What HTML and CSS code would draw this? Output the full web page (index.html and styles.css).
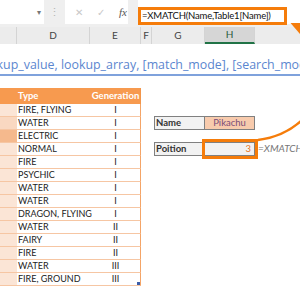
FILE: index.html
```html
<!DOCTYPE html>
<html lang="en">
<head>
    <meta charset="UTF-8">
    <title>XMATCH example</title>
    <link rel="stylesheet" href="styles.css">
</head>
<body>
    <div class="excel">
        <!-- Formula bar -->
        <div class="formula-bar">
            <div class="name-box"><span class="caret">▾</span></div>
            <div class="grip">⋮</div>
            <div class="fx-box">
                <span class="cancel">✕</span>
                <span class="enter">✓</span>
                <span class="fx">fx</span>
            </div>
            <div class="formula">
                <div class="formula-text">=XMATCH(Name,Table1[Name])</div>
            </div>
        </div>

        <!-- Column letters -->
        <div class="col-heads">
            <div class="ch ch-c"></div>
            <div class="ch ch-d">D</div>
            <div class="ch ch-e">E</div>
            <div class="ch ch-f">F</div>
            <div class="ch ch-g">G</div>
            <div class="ch ch-h active">H</div>
            <div class="ch ch-i"></div>
        </div>

        <div class="sheet">
            <div class="hint">XMATCH(lookup_value, lookup_array, [match_mode], [search_mode])</div>

            <div class="grid">
                <div class="th first"></div>
                <div class="th">Type</div>
                <div class="th gen">Generation</div>

                <div class="td first"></div><div class="td">FIRE, FLYING</div><div class="td gen">I</div>
                <div class="td first mid"></div><div class="td">WATER</div><div class="td gen">I</div>
                <div class="td first hit"></div><div class="td">ELECTRIC</div><div class="td gen">I</div>
                <div class="td first"></div><div class="td">NORMAL</div><div class="td gen">I</div>
                <div class="td first"></div><div class="td">FIRE</div><div class="td gen">I</div>
                <div class="td first"></div><div class="td">PSYCHIC</div><div class="td gen">I</div>
                <div class="td first"></div><div class="td">WATER</div><div class="td gen">I</div>
                <div class="td first"></div><div class="td">WATER</div><div class="td gen">I</div>
                <div class="td first"></div><div class="td">DRAGON, FLYING</div><div class="td gen">I</div>
                <div class="td first"></div><div class="td">WATER</div><div class="td gen">II</div>
                <div class="td first"></div><div class="td">FAIRY</div><div class="td gen">II</div>
                <div class="td first"></div><div class="td">FIRE</div><div class="td gen">II</div>
                <div class="td first"></div><div class="td">WATER</div><div class="td gen">III</div>
                <div class="td first"></div><div class="td">FIRE, GROUND</div><div class="td gen last">III</div>

                <div class="label name-label">Name</div>
                <div class="value name-value">Pikachu</div>
                <div class="label pos-label">Poition</div>
                <div class="value pos-value">3</div>
                <div class="echo">=XMATCH(Name,Table1[Name])</div>
            </div>
        </div>

        <svg class="callout" width="300" height="300" viewBox="0 0 300 300">
            <path d="M258 140 Q283 137 301 121" fill="none" stroke="#f57c0a" stroke-width="2.5"/>
            <polygon points="290.5,23 300,23 300,34" fill="#f57c0a"/>
        </svg>
    </div>
</body>
</html>
```

FILE: styles.css
```css
/* Page */
body {
    margin: 0;
    background-color: #fff;
    font-family: Lato, "Liberation Sans", sans-serif;
}

.excel {
    position: relative;
    width: 300px;
    height: 300px;
    overflow: hidden;
    background-color: #fff;
}

/* Formula bar */
.formula-bar {
    display: flex;
    align-items: flex-start;
    height: 27px;
    background-color: #efefef;
}

.name-box {
    display: flex;
    justify-content: flex-end;
    align-items: center;
    width: 44px;
    height: 24px;
    background-color: #fff;
    box-sizing: border-box;
    padding-right: 3px;
}

.caret {
    font-size: 8px;
    color: #777;
}

.grip {
    width: 21px;
    text-align: center;
    color: #b5b5b5;
    font-size: 11px;
    line-height: 24px;
}

.fx-box {
    display: flex;
    align-items: center;
    gap: 14px;
    width: 63px;
    height: 24px;
    padding-left: 10px;
    box-sizing: border-box;
    background-color: #fff;
}

.cancel,
.enter {
    color: #c8c8c8;
    font-size: 10px;
}

.fx {
    color: #555;
    font-family: "Liberation Serif", serif;
    font-style: italic;
    font-size: 11px;
}

.formula {
    flex: 1;
    height: 24px;
    margin-left: 10px;
    background-color: #fff;
}

.formula-text {
    width: 149px;
    height: 18px;
    margin-top: 7px;
    border: 3px solid #f57c0a;
    box-sizing: border-box;
    padding-left: 1px;
    font-size: 9.5px;
    letter-spacing: -0.2px;
    line-height: 12px;
    color: #111;
    white-space: nowrap;
    overflow: hidden;
}

/* Column headers */
.col-heads {
    display: flex;
    height: 17px;
    background-color: #ececec;
}

.ch {
    box-sizing: border-box;
    border-right: 1px solid #d4d4d4;
    text-align: center;
    font-size: 10px;
    line-height: 17px;
    color: #444;
}

.ch-c { width: 17px; }
.ch-d { width: 73px; }
.ch-e { width: 51px; }
.ch-f { width: 11px; }
.ch-g { width: 53px; }
.ch-h { width: 50px; }
.ch-i { flex: 1; border-right: none; }

.ch.active {
    background-color: #d6d6d6;
    border-bottom: 2px solid #217346;
    color: #2a5a3c;
    line-height: 15px;
}

/* Sheet */
.hint {
    height: 44px;
    box-sizing: border-box;
    padding-top: 12px;
    text-indent: -75px;
    white-space: nowrap;
    overflow: hidden;
    font-family: "Open Sans", sans-serif;
    font-size: 12.4px;
    line-height: 17px;
    color: #5b86cf;
}

.hint::after {
    content: "";
    display: block;
    height: 2px;
    margin-top: 1px;
    background-color: #7fa2dc;
}

.grid {
    display: grid;
    grid-template-columns: 17px 73px 51px 13px 51px 50px 1fr;
    grid-template-rows: 16px repeat(14, 13px);
}

.th {
    background-color: #f79a4f;
    color: #fff;
    font-weight: bold;
    font-size: 9.5px;
    line-height: 16px;
    padding-left: 1px;
}

.th.gen {
    text-align: center;
    border-right: 1px solid #f2954a;
}

.th.first {
    grid-column: 1;
}

.td {
    box-sizing: border-box;
    border-bottom: 1px solid #f6c6a3;
    font-size: 9px;
    line-height: 12px;
    color: #222;
    padding-left: 1px;
    white-space: nowrap;
}

.td.first {
    grid-column: 1;
    background-color: #fbe5d6;
}

.td.first.mid {
    background-color: #f9d8c1;
}

.td.first.hit {
    background-color: #f5b98d;
}

.td.gen {
    text-align: center;
    border-right: 1px solid #f4a466;
}

.td.last {
    position: relative;
}

.td.last::after {
    content: "";
    position: absolute;
    right: 0;
    bottom: 0;
    width: 3px;
    height: 3px;
    background-color: #3b5ea8;
}

/* Lookup panel */
.label,
.value {
    box-sizing: border-box;
    border: 1px solid #808080;
    font-size: 9.5px;
    line-height: 11px;
}

.label {
    grid-column: 5;
    background-color: #f2f2f2;
    color: #333;
    font-weight: bold;
    padding-left: 1px;
}

.value {
    grid-column: 6;
    border-left: none;
    text-align: center;
}

.name-label,
.name-value {
    grid-row: 3;
    margin-top: -1px;
}

.name-value {
    background-color: #f8cbad;
    color: #7a4d78;
}

.pos-label,
.pos-value {
    grid-row: 5;
    margin-top: -1px;
}

.pos-value {
    background-color: #f2f2f2;
    text-align: right;
    padding-right: 3px;
    color: #e7761e;
    outline: 3px solid #f57c0a;
    outline-offset: 0;
}

.echo {
    grid-column: 7;
    grid-row: 5;
    padding-left: 3px;
    font-size: 10px;
    font-style: italic;
    line-height: 11px;
    color: #777;
    white-space: nowrap;
}

/* Orange callout arrow */
.callout {
    position: absolute;
    top: 0;
    left: 0;
    pointer-events: none;
}
```
